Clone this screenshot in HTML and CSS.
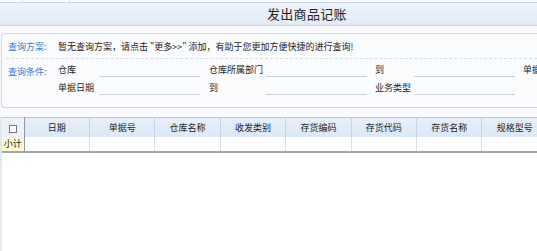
FILE: index.html
```html
<!doctype html>
<html lang="zh-CN">
  <head>
    <meta charset="UTF-8" />
    <title>发出商品记账</title>
    <link rel="stylesheet" href="styles.css">
  </head>
  <body>
    <div class="top-strip">
      <span class="tick tick-a"></span>
      <span class="tick tick-b"></span>
    </div>

    <div class="title-bar">
      <h1>发出商品记账</h1>
    </div>

    <div class="query-panel">
      <div class="query-row plan-row">
        <span class="query-label">查询方案:</span>
        <span class="plan-text">暂无查询方案，请点击 "更多&gt;&gt;" 添加，有助于您更加方便快捷的进行查询!</span>
      </div>
      <div class="query-row cond-row">
        <span class="query-label">查询条件:</span>
        <div class="fields">
          <span class="field-label">仓库</span>
          <span class="field-input"></span>
          <span class="field-label">仓库所属部门</span>
          <span class="field-input"></span>
          <span class="field-label">到</span>
          <span class="field-input"></span>
          <span class="field-label">单据</span>

          <span class="field-label">单据日期</span>
          <span class="field-input"></span>
          <span class="field-label">到</span>
          <span class="field-input"></span>
          <span class="field-label">业务类型</span>
          <span class="field-input"></span>
          <span class="field-label"></span>
        </div>
      </div>
    </div>

    <div class="grid-wrap">
      <table class="data-grid">
        <colgroup>
          <col class="col-check">
          <col class="col-data">
          <col class="col-data">
          <col class="col-data">
          <col class="col-data">
          <col class="col-data">
          <col class="col-data">
          <col class="col-data">
          <col class="col-data">
        </colgroup>
        <thead>
          <tr>
            <th class="check-cell"><span class="checkbox"></span></th>
            <th>日期</th>
            <th>单据号</th>
            <th>仓库名称</th>
            <th>收发类别</th>
            <th>存货编码</th>
            <th>存货代码</th>
            <th>存货名称</th>
            <th>规格型号</th>
          </tr>
        </thead>
        <tbody>
          <tr class="subtotal">
            <td class="check-cell sum-label">小计</td>
            <td></td>
            <td></td>
            <td></td>
            <td></td>
            <td></td>
            <td></td>
            <td></td>
            <td></td>
          </tr>
        </tbody>
      </table>
    </div>
  </body>
</html>
```

FILE: styles.css
```css
html,
body {
  margin: 0;
  height: 100%;
  overflow: hidden;
}
body {
  font-family: "Noto Sans CJK SC", "Liberation Sans", sans-serif;
  font-size: 9px;
  color: #333;
  background-color: #f8fafd;
}
.top-strip {
  position: relative;
  height: 2px;
  background-color: #fff;
}
.tick {
  position: absolute;
  top: 0;
  width: 1px;
  height: 2px;
  background-color: #d4dbe5;
}
.tick-a {
  left: 22px;
}
.tick-b {
  left: 69px;
}
.title-bar {
  height: 22px;
  border-top: 1px solid #c8d8ec;
  border-bottom: 1px solid #c8d8ec;
  background: linear-gradient(#edf3fb, #e2ebf7);
}
.title-bar h1 {
  margin: 0;
  padding-left: 267px;
  font-size: 13px;
  font-weight: normal;
  line-height: 22px;
  color: #222;
  letter-spacing: 0.3px;
}
.query-panel {
  margin: 7px 0 0 1px;
  height: 73px;
  border: 1px solid #c6d8ee;
  border-right: none;
  border-radius: 4px 0 0 4px;
  background-color: #fbfcfe;
}
.query-row {
  display: flex;
}
.query-label {
  width: 50px;
  padding-left: 6px;
  flex-shrink: 0;
  color: #2f7bd2;
}
.plan-row {
  height: 24px;
  align-items: center;
  margin-left: 4px;
  border-bottom: 1px dashed #d6dde8;
}
.plan-row .query-label {
  padding-left: 2px;
}
.plan-text {
  color: #222;
  white-space: nowrap;
}
.cond-row {
  padding-top: 2px;
}
.cond-row .query-label {
  padding-top: 4px;
}
.fields {
  display: grid;
  grid-template-columns: 41px 110px 57px 109px 39px 109px 30px;
  grid-auto-rows: 18px;
  white-space: nowrap;
}
.field-label {
  line-height: 18px;
  color: #222;
}
.field-input {
  width: 101px;
  height: 15px;
  border-bottom: 1px solid #cdd1d8;
}
.grid-wrap {
  margin-top: 9px;
  height: 134px;
  border-left: 2px solid #e2e8f0;
  background-color: #fff;
}
.data-grid {
  table-layout: fixed;
  border-collapse: collapse;
  width: 546px;
}
.col-check {
  width: 22px;
}
.col-data {
  width: 65.4px;
}
.data-grid th {
  height: 19px;
  padding: 0;
  border-top: 1px solid #bccbdf;
  border-right: 1px solid #c3d2e6;
  background: linear-gradient(#e6effa, #dbe7f6);
  font-weight: normal;
  color: #222;
  text-align: center;
}
.subtotal {
  height: 15px;
}
.data-grid td {
  padding: 0;
  line-height: 14px;
  border-right: 1px solid #d7dfea;
  border-bottom: 2px solid #9ea7b4;
}
.data-grid .check-cell {
  border-right: 1px solid #8f99a6;
}
.data-grid th.check-cell {
  background: #eef2f8;
}
.checkbox {
  display: inline-block;
  width: 6px;
  height: 6px;
  border: 1px solid #6f7985;
  background-color: #fff;
  vertical-align: middle;
}
.sum-label {
  background-color: #fdfbd2;
  color: #222;
  text-align: center;
  white-space: nowrap;
}
```
